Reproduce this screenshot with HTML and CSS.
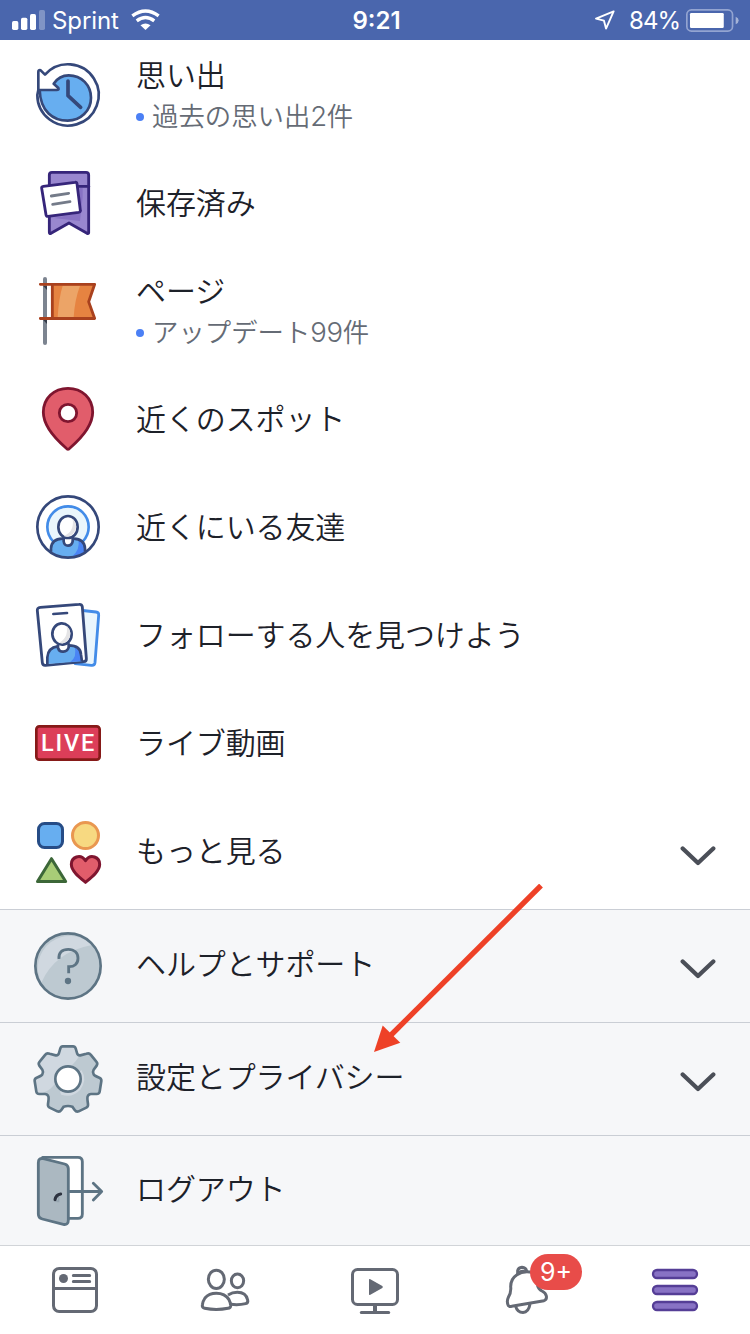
FILE: index.html
```html
<!DOCTYPE html>
<html lang="ja">
<head>
<meta charset="utf-8">
<title>メニュー</title>
<link rel="stylesheet" href="styles.css">
</head>
<body>
<div class="screen">
  <header class="status">
    <div class="status-side">
      <svg class="signal" viewBox="36 30 99 60"><g fill="#fff"><rect x="36" y="63" width="19" height="27" rx="5"/><rect x="63" y="53" width="19" height="37" rx="5"/><rect x="90" y="42" width="18" height="48" rx="5"/><rect x="117" y="30" width="18" height="60" rx="5" opacity=".3"/></g></svg>
      <span class="carrier">Sprint</span>
      <svg class="wifi" viewBox="392 28 86 62"><g fill="none" stroke="#fff" stroke-width="10"><path d="M396 48Q435 19 474 48"/><path d="M409 63Q435 43 461 63"/></g><path d="M420 76Q435 65 450 76L435 90Z" fill="#fff"/></svg>
    </div>
    <span class="clock">9:21</span>
    <div class="status-side status-right">
      <svg class="locate" viewBox="680 34 58 58"><path d="M734 38L683 59L706 65L712 88Z" fill="none" stroke="#fff" stroke-width="5.500" stroke-linejoin="round"/></svg>
      <span class="percent">84%</span>
      <svg class="battery" viewBox="948 27 160 69"><rect x="950.5" y="29.500" width="138" height="64" rx="14" fill="none" stroke="#93a4d1" stroke-width="5"/><rect x="960" y="39" width="102" height="45" rx="4" fill="#fff"/><path d="M1098 50Q1107 54 1107 61.500Q1107 69 1098 73Z" fill="#a5b3d7"/></svg>
    </div>
  </header>

  <main class="menu">
    <ul class="list">
      <li class="row">
        <svg class="icon" viewBox="96 177 216 216"><g fill="none" stroke="#35487a" stroke-width="8" stroke-linecap="round" stroke-linejoin="round"><path d="M135 224A92 92 0 1 1 112 285L115 270V216Q115 209 122 211Z" fill="#fff"/><path d="M161 251Q178 226 206 226C245 226 273 256 273 293C273 332 242 362 203 362C160 362 121 335 119 270H170Q178 270 175 264Z" fill="#67aef0"/><path d="M204 243V287L242 322" stroke-width="11"/></g></svg>
        <div class="text"><span class="label">思い出</span><span class="sub">過去の思い出<span class="num">2</span>件</span></div>
      </li>
      <li class="row">
        <svg class="icon" viewBox="96 51 216 216"><g stroke="#36257a" stroke-width="8.500" stroke-linejoin="round" stroke-linecap="round"><path d="M156 67H258Q266 67 266 75V248Q266 252 261 250L207 219L153 250Q148 252 148 247V75Q148 67 156 67Z" fill="#9987cf"/><path d="M238 114H248V140L240 213L160 204L240 190Z" fill="#8872c4" stroke="none"/><path d="M148 109H266"/><path d="M130 109L225 97Q230 96 231 101L241 181Q242 186 236 187L144 199Q139 200 138 194L125 115Q124 110 130 109Z" fill="#fff"/><path d="M154 138L206 130M158 163L210 155" stroke="#747b89"/></g></svg>
        <div class="text"><span class="label">保存済み</span></div>
      </li>
      <li class="row">
        <svg class="icon" viewBox="96 375 216 216"><rect x="129" y="381" width="12" height="204" rx="6" fill="#7c8490"/><path d="M129 407H141V420ZM129 509H141V522Z" fill="#353c49"/><path d="M157 403H286L265 455L286 505H157Z" fill="#e68341"/><path d="M188 407H240Q224 450 221 502H173Q176 445 188 407Z" fill="#eca467"/><path d="M121 403H284L266 455L284 505.500H121M157 403V505" fill="none" stroke="#a9411e" stroke-width="8.500" stroke-linecap="round" stroke-linejoin="round"/></svg>
        <div class="text"><span class="label">ページ</span><span class="sub">アップデート<span class="num">99</span>件</span></div>
      </li>
      <li class="row">
        <svg class="icon" viewBox="96 39 216 216"><g stroke="#7f152f" stroke-width="8.500"><path d="M204 238Q201 238 198 234C162 203 130 167 130 127C130 85 162 55 204 55S278 85 278 127C278 167 246 203 210 234Q207 238 204 238Z" fill="#e15d6b"/><circle cx="204" cy="129" r="26" fill="#fff"/></g></svg>
        <div class="text"><span class="label">近くのスポット</span></div>
      </li>
      <li class="row">
        <svg class="icon" viewBox="96 363 216 216"><circle cx="204" cy="471" r="92" fill="#fff"/><circle cx="204" cy="471" r="62" fill="#eaf6fc" stroke="#438ce8" stroke-width="8"/><path d="M153 545V535Q155 507 187 506H221Q253 507 255 535V545Q204 580 153 545Z" fill="#67aef0"/><path d="M235 509Q242 538 215 561L240 556L255 545Q255 516 235 509Z" fill="#4a84f5"/><g fill="none" stroke="#35487a" stroke-width="8"><circle cx="204" cy="471" r="92"/><path d="M153 545V535Q155 507 187 506H221Q253 507 255 535V545"/><path d="M191 501V514Q193 527 204 527T218 514V501" fill="#fff"/><ellipse cx="204" cy="471" rx="29" ry="33" fill="#fff"/></g><path d="M218 446C222 475 211 490 191 498Q204 504 218 493Q240 468 218 446Z" fill="#e4e4e6"/></svg>
        <div class="text"><span class="label">近くにいる友達</span></div>
      </li>
      <li class="row">
        <svg class="icon" viewBox="96 27 216 216"><g stroke-width="8.500" stroke-linejoin="round"><path d="M235 60L288 66Q297 67 296 76L285 218Q284 227 274 226L225 221Z" fill="#eaf6fd" stroke="#438ce8"/><path d="M121 52L237 43Q246 42 247 51L259 205Q260 214 251 215L137 226Q128 227 127 218L112 62Q111 53 121 52Z" fill="#fff" stroke="#35487a"/></g><path d="M142 222V202Q144 173 173 169L206 166Q242 166 243 194L246 214Z" fill="#67aef0"/><path d="M224 170Q232 200 211 216L245 213L243 194Q242 177 224 170Z" fill="#4a84f5"/><g fill="none" stroke="#35487a" stroke-width="8"><path d="M142 224V202Q144 173 173 169L206 166Q242 166 243 194L246 214"/><path d="M174 163V174Q178 186 190 185T206 172V160" fill="#fff"/><ellipse cx="186" cy="132" rx="29" ry="32" transform="rotate(-5 186 132)" fill="#fff"/><path d="M160 72L201 69" stroke-linecap="round"/></g><path d="M200 107C204 134 195 148 177 158Q191 164 202 154Q222 128 200 107Z" fill="#e4e4e6"/></svg>
        <div class="text"><span class="label">フォローする人を見つけよう</span></div>
      </li>
      <li class="row">
        <svg class="icon" viewBox="96 351 216 216"><rect x="109" y="409" width="190" height="100" rx="9" fill="#dc3e59" stroke="#861a18" stroke-width="8"/><text class="live" transform="translate(123 484) scale(.98 1)" textLength="163" lengthAdjust="spacing">LIVE</text></svg>
        <div class="text"><span class="label">ライブ動画</span></div>
      </li>
      <li class="row">
        <svg class="icon" viewBox="96 45 216 216"><g stroke-width="9" stroke-linejoin="round"><rect x="115.500" y="70.500" width="72" height="72" rx="18" fill="#67aef0" stroke="#264c86"/><circle cx="256.500" cy="106.500" r="39" fill="#f7d981" stroke="#e99750"/><path d="M154.500 176L197 244.500H112.500Z" fill="#a8cd77" stroke="#3c6738"/><path d="M256.500 247C237 231 214 213 214 193C214 172 241 159 256.500 182C272 159 299 172 299 193C299 213 276 231 256.500 247Z" fill="#e15d6b" stroke="#7f152f"/></g></svg>
        <div class="text"><span class="label">もっと見る</span></div>
        <svg class="chevron" viewBox="0 0 36 20"><path d="M2.700 2.500L18 17L33.300 2.500"/></svg>
      </li>
    </ul>

    <ul class="list list-system">
      <li class="row">
        <svg class="icon" viewBox="96 390 216 216"><circle cx="204" cy="498" r="98" fill="#bdc9d1"/><path d="M124 548Q164 456 276 435A96 96 0 0 0 124 548Z" fill="#d0d8e0"/><circle cx="204" cy="498" r="98" fill="none" stroke="#5d7484" stroke-width="8"/><path d="M177 477C175 458 186 448 205 448C223 448 234 459 234 475C234 492 222 501 206 500V520" fill="none" stroke="#5d7484" stroke-width="8.500"/><circle cx="204" cy="543" r="9.500" fill="#5d7484"/></svg>
        <div class="text"><span class="label">ヘルプとサポート</span></div>
        <svg class="chevron" viewBox="0 0 36 20"><path d="M2.700 2.500L18 17L33.300 2.500"/></svg>
      </li>
      <li class="row">
        <svg class="icon" viewBox="96 69 216 216"><defs><path id="gear" d="M188 79H219Q225 79 227 85L231 99Q233 107 241 106L259 101Q268 98 272 104L289 125Q294 130 290 137L281 149Q277 156 281 163Q283 167 298 173Q305 176 304 183L299 215Q298 222 290 222H273Q266 222 263 229Q261 233 264 252Q265 260 259 263L236 274Q229 277 224 270L217 260Q211 258 204 258T191 260L184 270Q179 277 172 274L149 263Q143 260 144 252Q147 233 145 229Q142 222 135 222H118Q110 222 109 215L104 183Q103 176 110 173Q125 167 127 163Q131 156 127 149L118 137Q114 130 119 125L136 104Q140 98 149 101L167 106Q175 107 177 99L181 85Q183 79 188 79Z"/><clipPath id="gear-shape"><use href="#gear"/></clipPath></defs><g clip-path="url(#gear-shape)"><path d="M90 60H320V290H90Z" fill="#bdc9d1"/><path d="M90 60H270Q245 100 228 122L157 200Q145 215 110 225H90Z" fill="#d0d8e0"/><path d="M244 150Q263 178 241 209Q217 235 184 224L180 216Z" fill="#d0d8e0"/></g><use href="#gear" fill="none" stroke="#5d7484" stroke-width="8"/><circle cx="204" cy="177" r="38" fill="#fff" stroke="#5d7484" stroke-width="8"/></svg>
        <div class="text"><span class="label">設定とプライバシー</span></div>
        <svg class="chevron" viewBox="0 0 36 20"><path d="M2.700 2.500L18 17L33.300 2.500"/></svg>
      </li>
      <li class="row row-last">
        <svg class="icon" viewBox="96 405 216 216"><g fill="none" stroke="#5d7484" stroke-width="8.500" stroke-linejoin="round"><path d="M128 412H234Q247 412 247 425V582Q247 595 234 595H205L128 570Z" fill="#fff"/><path d="M130 416L194 432Q205 435 205 446V600Q205 616 190 613L127 597Q115 594 115 582V428Q115 413 130 416Z" fill="#abb8c1"/><path d="M209 514.500H304M280 490L305 514.500L280 540" stroke-linecap="round"/></g><path d="M166 540Q180 546 172 525L178 530V547H170Z" fill="#96a5b0"/><path d="M165 539Q168 524 182 522" fill="none" stroke="#2d3340" stroke-width="9" stroke-linecap="round"/></svg>
        <div class="text"><span class="label">ログアウト</span></div>
      </li>
    </ul>
  </main>

  <nav class="tabs">
    <a class="tab"><svg class="tab-icon" viewBox="135 90 180 180"><rect x="160.500" y="115.500" width="129" height="129" rx="17"/><path d="M160 175.500H290"/><path d="M220 136.500H269M220 154.500H269" stroke-linecap="round"/><circle cx="190.500" cy="145.500" r="13.500" fill="#646974" stroke="none"/></svg></a>
    <a class="tab"><svg class="tab-icon" viewBox="585 90 180 180"><ellipse cx="649" cy="148" rx="24" ry="27.500"/><ellipse cx="712.500" cy="152.500" rx="18.500" ry="20.500"/><path d="M684 195Q697 187 712 187Q738 187 743 210Q745 219 737 221Q716 226 692 223"/><path d="M649 190Q675 190 687 209Q693 220 692 228Q691 234 684 235Q649 242 614 235Q606 233 607 225Q608 214 615 204Q627 190 649 190Z"/></svg></a>
    <a class="tab"><svg class="tab-icon" viewBox="1035 90 180 180"><rect x="1057.500" y="118.500" width="135" height="105" rx="15"/><path d="M1125 224V247" stroke-width="12"/><path d="M1084 247.500H1166" stroke-linecap="round"/><path d="M1107 149Q1107 145 1111 148L1147 168Q1150 171 1147 174L1111 194Q1107 197 1107 192Z" fill="#646974" stroke="none"/></svg></a>
    <a class="tab"><svg class="tab-icon" viewBox="360 90 180 180"><path d="M428 132V122Q430 113 441 112Q453 113 455 124"/><path d="M430 128Q439 119 451 124" stroke-width="6"/><path d="M472 127Q443 122 426 134Q407 146 407 170Q409 188 400 202Q394 215 400 227Q403 231 410 229L507 212Q516 209 514 198Q512 188 501 183Q491 178 487 165"/><path d="M422 229Q427 247 444 247.500Q461 247 465 222"/></svg><span class="badge">9+</span></a>
    <a class="tab"><svg class="tab-icon tab-menu" viewBox="810 90 180 180"><rect x="834" y="120" width="132" height="24" rx="12"/><rect x="834" y="168" width="132" height="24" rx="12"/><rect x="834" y="216" width="132" height="24" rx="12"/></svg></a>
  </nav>

  <svg class="pointer" viewBox="0 0 170 170"><path d="M167 1.500L17 151" stroke="#ee4127" stroke-width="5.300"/><path d="M0 168L8.700 141.500L26.300 158.700Z" fill="#ee4127"/></svg>
</div>
</body>
</html>
```
FILE: styles.css
```css
* { box-sizing: border-box; }
body {
  margin: 0;
  background: #fff;
  font-family: Inter, "Noto Sans CJK JP", sans-serif;
}
.screen {
  position: relative;
  display: flex;
  flex-direction: column;
  width: 750px;
  height: 1334px;
  overflow: hidden;
}
svg { display: block; flex: none; }

.status {
  display: grid;
  grid-template-columns: 1fr auto 1fr;
  align-items: center;
  height: 40px;
  padding: 0 11px 0 12px;
  background: #4a66ad;
  color: #fff;
  font-size: 24px;
  line-height: 38px;
}
.status-side { display: flex; align-items: center; }
.status-right { justify-content: flex-end; }
.status span { padding-top: 2px; }
.signal { width: 33px; height: 20px; }
.carrier { width: 67px; margin-left: 7px; letter-spacing: -.1px; }
.wifi { width: 29px; height: 21px; margin-left: 12px; margin-bottom: 1px; }
.clock { padding-left: 2px; font-weight: 600; letter-spacing: 0; }
.locate { width: 20px; height: 20px; margin-right: 14px; }
.percent { margin-right: 6px; letter-spacing: -1px; }
.battery { width: 53px; height: 23px; }

.list { margin: 0; padding: 1px 0 4px; list-style: none; }
.row {
  display: flex;
  align-items: center;
  height: 108px;
  padding: 0 34px 0 32px;
}
.icon { width: 72px; height: 72px; margin-right: 32px; }
.text {
  display: flex;
  flex: 1;
  flex-direction: column;
  padding-bottom: 2px;
}
.label {
  padding-bottom: 3px;
  color: #1d2129;
  font-family: "Noto Sans CJK JP", sans-serif;
  font-size: 30px;
  font-weight: 350;
  line-height: 38px;
  letter-spacing: -.12px;
  white-space: nowrap;
}
.sub {
  display: flex;
  align-items: center;
  color: #656b75;
  font-family: "Noto Sans CJK JP", sans-serif;
  font-size: 26.400px;
  font-weight: 350;
  line-height: 38px;
}
.sub::before {
  width: 8px;
  height: 8px;
  margin-top: 4px;
  margin-right: 8px;
  border-radius: 50%;
  background: #4b80f5;
  content: "";
}
.num {
  padding-top: 2px;
  font-family: Inter, sans-serif;
  font-size: 27.500px;
  font-weight: 300;
  letter-spacing: -.4px;
}
.chevron { width: 36px; height: 20px; margin-top: 9px; }
.chevron path {
  fill: none;
  stroke: #4b4f58;
  stroke-width: 4.300;
  stroke-linecap: round;
  stroke-linejoin: round;
}
.live {
  fill: #fff;
  font-family: Roboto, sans-serif;
  font-size: 72px;
  font-weight: 500;
}
.list-system { padding: 0; background: #f6f7f9; }
.list-system .row {
  height: 113px;
  border-top: 1px solid #caced5;
}
.list-system .row-last { height: 110px; }
.list-system .label { margin-bottom: 4px; }
.list-system .row-last .label { margin-bottom: 2px; }
.list-system .chevron { margin-top: 5px; }

.tabs {
  display: grid;
  grid-template-columns: repeat(5, 1fr);
  height: 89px;
  border-top: 1px solid #d1d4d8;
  background: #fff;
}
.tab {
  position: relative;
  display: flex;
  align-items: center;
  justify-content: center;
}
.tab-icon {
  width: 60px;
  height: 60px;
  fill: none;
  stroke: #646974;
  stroke-width: 9;
  stroke-linejoin: round;
}
.tab-menu { fill: #8872c4; stroke: #553e96; stroke-width: 7; }
.badge {
  position: absolute;
  top: 8px;
  left: 80px;
  width: 52px;
  height: 36px;
  border-radius: 18px;
  background: #e84c49;
  color: #fff;
  font-size: 25px;
  line-height: 37px;
  text-align: center;
}
.pointer {
  position: absolute;
  top: 884px;
  left: 374px;
  width: 170px;
  height: 170px;
}
```
